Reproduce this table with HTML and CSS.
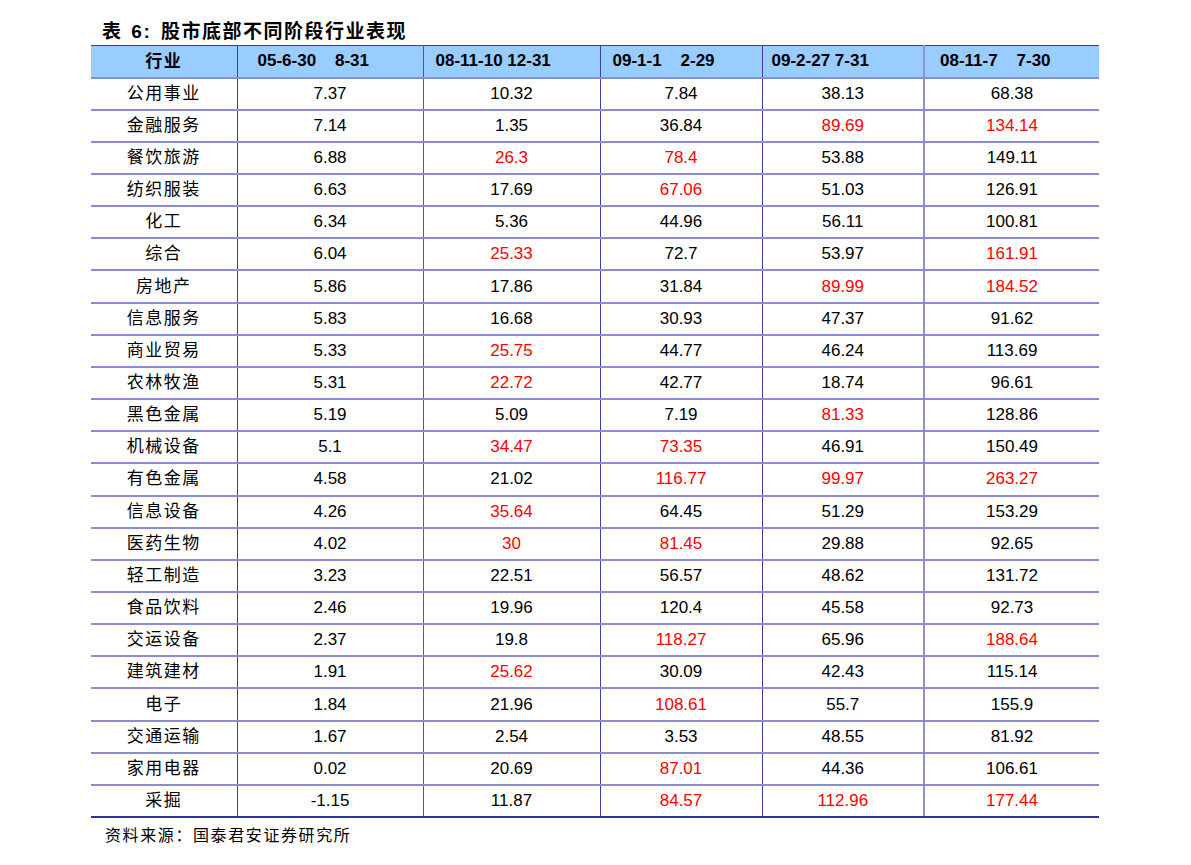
FILE: index.html
```html
<!DOCTYPE html>
<html lang="zh-CN">
<head>
<meta charset="utf-8">
<title>表 6：股市底部不同阶段行业表现</title>
<link rel="stylesheet" href="styles.css">
</head>
<body>
<div class="page">
  <h1 class="title">表 <span class="num">6:</span> 股市底部不同阶段行业表现</h1>
  <table class="data">
    <colgroup>
      <col class="c1"><col class="c2"><col class="c3"><col class="c4"><col class="c5"><col class="c6">
    </colgroup>
    <thead>
      <tr>
        <th class="h1 cn">行业</th>
        <th class="h2">05-6-30&nbsp;&nbsp;&nbsp;&nbsp;8-31</th>
        <th class="h3">08-11-10 12-31</th>
        <th class="h4">09-1-1&nbsp;&nbsp;&nbsp;&nbsp;2-29</th>
        <th class="h5">09-2-27 7-31</th>
        <th class="h6">08-11-7&nbsp;&nbsp;&nbsp;&nbsp;7-30</th>
      </tr>
    </thead>
    <tbody>
      <tr><td class="cn">公用事业</td><td>7.37</td><td>10.32</td><td>7.84</td><td>38.13</td><td>68.38</td></tr>
      <tr><td class="cn">金融服务</td><td>7.14</td><td>1.35</td><td>36.84</td><td class="up">89.69</td><td class="up">134.14</td></tr>
      <tr><td class="cn">餐饮旅游</td><td>6.88</td><td class="up">26.3</td><td class="up">78.4</td><td>53.88</td><td>149.11</td></tr>
      <tr><td class="cn">纺织服装</td><td>6.63</td><td>17.69</td><td class="up">67.06</td><td>51.03</td><td>126.91</td></tr>
      <tr><td class="cn">化工</td><td>6.34</td><td>5.36</td><td>44.96</td><td>56.11</td><td>100.81</td></tr>
      <tr><td class="cn">综合</td><td>6.04</td><td class="up">25.33</td><td>72.7</td><td>53.97</td><td class="up">161.91</td></tr>
      <tr><td class="cn">房地产</td><td>5.86</td><td>17.86</td><td>31.84</td><td class="up">89.99</td><td class="up">184.52</td></tr>
      <tr><td class="cn">信息服务</td><td>5.83</td><td>16.68</td><td>30.93</td><td>47.37</td><td>91.62</td></tr>
      <tr><td class="cn">商业贸易</td><td>5.33</td><td class="up">25.75</td><td>44.77</td><td>46.24</td><td>113.69</td></tr>
      <tr><td class="cn">农林牧渔</td><td>5.31</td><td class="up">22.72</td><td>42.77</td><td>18.74</td><td>96.61</td></tr>
      <tr><td class="cn">黑色金属</td><td>5.19</td><td>5.09</td><td>7.19</td><td class="up">81.33</td><td>128.86</td></tr>
      <tr><td class="cn">机械设备</td><td>5.1</td><td class="up">34.47</td><td class="up">73.35</td><td>46.91</td><td>150.49</td></tr>
      <tr><td class="cn">有色金属</td><td>4.58</td><td>21.02</td><td class="up">116.77</td><td class="up">99.97</td><td class="up">263.27</td></tr>
      <tr><td class="cn">信息设备</td><td>4.26</td><td class="up">35.64</td><td>64.45</td><td>51.29</td><td>153.29</td></tr>
      <tr><td class="cn">医药生物</td><td>4.02</td><td class="up">30</td><td class="up">81.45</td><td>29.88</td><td>92.65</td></tr>
      <tr><td class="cn">轻工制造</td><td>3.23</td><td>22.51</td><td>56.57</td><td>48.62</td><td>131.72</td></tr>
      <tr><td class="cn">食品饮料</td><td>2.46</td><td>19.96</td><td>120.4</td><td>45.58</td><td>92.73</td></tr>
      <tr><td class="cn">交运设备</td><td>2.37</td><td>19.8</td><td class="up">118.27</td><td>65.96</td><td class="up">188.64</td></tr>
      <tr><td class="cn">建筑建材</td><td>1.91</td><td class="up">25.62</td><td>30.09</td><td>42.43</td><td>115.14</td></tr>
      <tr><td class="cn">电子</td><td>1.84</td><td>21.96</td><td class="up">108.61</td><td>55.7</td><td>155.9</td></tr>
      <tr><td class="cn">交通运输</td><td>1.67</td><td>2.54</td><td>3.53</td><td>48.55</td><td>81.92</td></tr>
      <tr><td class="cn">家用电器</td><td>0.02</td><td>20.69</td><td class="up">87.01</td><td>44.36</td><td>106.61</td></tr>
      <tr class="last"><td class="cn">采掘</td><td>-1.15</td><td>11.87</td><td class="up">84.57</td><td class="up">112.96</td><td class="up">177.44</td></tr>
    </tbody>
  </table>
  <p class="source">资料来源：国泰君安证券研究所</p>
</div>
</body>
</html>
```

FILE: styles.css
```css
html, body {
  margin: 0;
  padding: 0;
  background: #ffffff;
}

.page {
  padding: 20px 0 0 91px;
  width: 1008px;
  font-family: "Liberation Sans", "Noto Sans CJK SC", Arial, sans-serif;
  color: #000000;
}

.title {
  margin: 0 0 5px 11px;
  height: 20px;
  line-height: 20px;
  font-size: 19px;
  font-weight: bold;
  font-family: "Noto Sans CJK SC", sans-serif;
  letter-spacing: 1.5px;
}

.title .num {
  font-family: "Liberation Sans", Arial, sans-serif;
  margin: 0 4px 0 3px;
}

.data {
  border-collapse: collapse;
  table-layout: fixed;
  width: 1008px;
}

.c1 { width: 146px; }
.c2 { width: 186px; }
.c3 { width: 177px; }
.c4 { width: 162px; }
.c5 { width: 162px; }
.c6 { width: 175px; }

.data thead tr {
  height: 32px;
}

.data th {
  padding: 0;
  background: #99ccff;
  border-top: 1px solid #3c3ca0;
  border-bottom: 2px solid #8c8cd2;
  font-size: 17px;
  line-height: 20px;
  font-weight: bold;
  text-align: left;
  white-space: nowrap;
}

.data th.h1 { text-align: center; }
.data th.h2 { padding-left: 20px; }
.data th.h3 { padding-left: 12px; }
.data th.h4 { padding-left: 12px; }
.data th.h5 { padding-left: 9px; }
.data th.h6 { padding-left: 15px; }

.data tbody tr {
  height: 32.17px;
}

.data td {
  padding: 0;
  border-bottom: 2px solid #8c8cd2;
  font-size: 17px;
  line-height: 20px;
  text-align: center;
  white-space: nowrap;
}

.data tr.last td {
  border-bottom: 2px solid #3030a0;
}

.data th:nth-child(1), .data td:nth-child(1) { border-right: 1px solid #4040a4; }
.data th:nth-child(2), .data td:nth-child(2) { border-right: 1px solid #5a50b4; }
.data th:nth-child(3), .data td:nth-child(3) { border-right: 1px solid #4040a4; }
.data th:nth-child(4), .data td:nth-child(4) { border-right: 1px solid #4040a4; }
.data th:nth-child(5), .data td:nth-child(5) { border-right: 2px solid #9090d8; }

.cn {
  font-family: "Noto Sans CJK SC", sans-serif;
  font-size: 16px;
  letter-spacing: 1.5px;
  font-weight: 400;
}

.data td.cn {
  padding-bottom: 4px;
}

.data th.cn {
  font-weight: bold;
  font-size: 17px;
  padding-bottom: 2px;
}

.up {
  color: #ff0000;
}

.source {
  margin: 4px 0 0 14px;
  font-family: "Noto Sans CJK SC", sans-serif;
  font-size: 16px;
  letter-spacing: 1.6px;
  line-height: 24px;
}
```
